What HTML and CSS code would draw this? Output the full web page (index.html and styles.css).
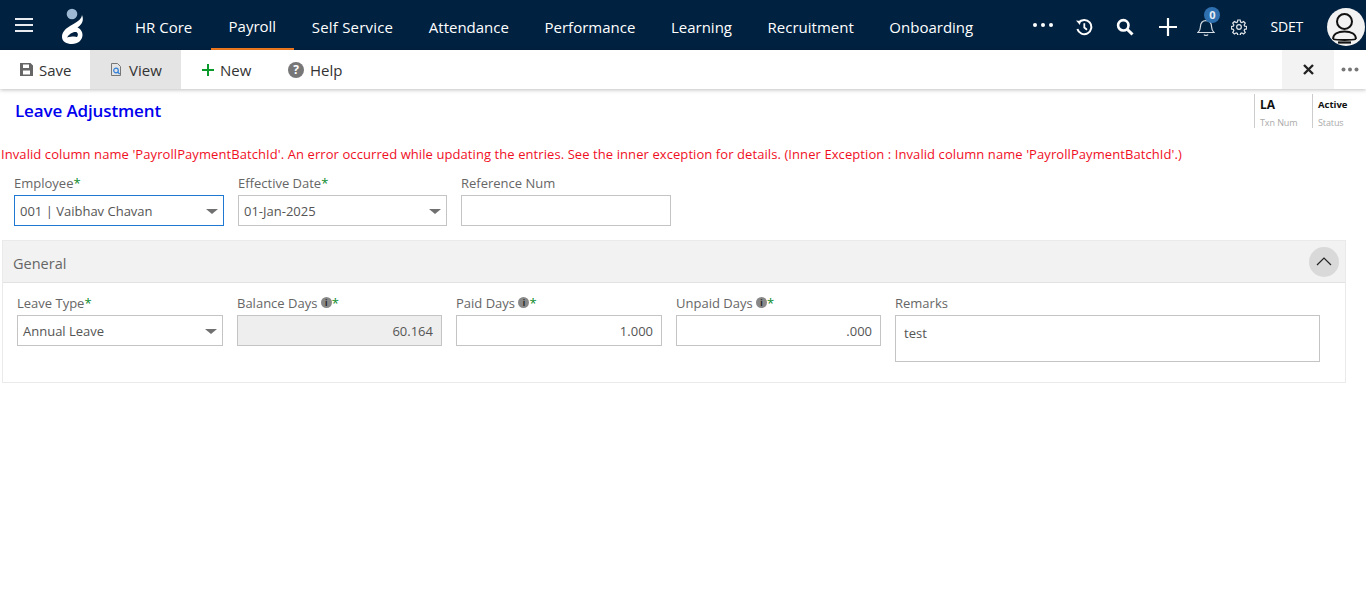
FILE: index.html
```html
<!DOCTYPE html>
<html lang="en">
<head>
<meta charset="utf-8">
<title>Leave Adjustment</title>
<link rel="stylesheet" href="styles.css">
</head>
<body>
<header class="topbar">
  <button class="burger" aria-label="Menu"><span></span><span></span><span></span></button>
  <svg class="logo" viewBox="0 0 24 37" width="24" height="37">
    <circle cx="12" cy="6" r="5.300" fill="#9db8d2"/>
    <path fill="#fff" fill-rule="evenodd" d="M22 7C21.500 12 16 14.500 10 18C5 21 2 24.500 2 29C2 33.500 6.500 36 12 36C18 36 22.500 32 22.500 27C22.500 23 20 20.500 17.500 19.500C21 17 24.500 13 22 7ZM7 29.500C9 26 13 23.500 16 24C18 24.500 18.500 27 17 29C15 28 11 28.500 7 29.500Z"/>
  </svg>
  <nav class="mainnav">
    <a class="first">HR Core</a><a class="on">Payroll</a><a class="wide">Self Service</a><a>Attendance</a><a>Performance</a><a>Learning</a><a>Recruitment</a><a>Onboarding</a>
  </nav>
  <div class="tools">
    <svg class="t-more" width="22" height="6" viewBox="0 0 22 6"><circle cx="3" cy="3" r="2" fill="#fff"/><circle cx="11" cy="3" r="2" fill="#fff"/><circle cx="19" cy="3" r="2" fill="#fff"/></svg>
    <svg class="t-hist" width="18" height="18" viewBox="0 0 18 18" fill="none" stroke="#fff" stroke-width="2"><path d="M3.600 4.700A7.100 7.100 0 1 1 2.400 11"/><path d="M1 2.600l4.800.4-.9 4z" fill="#fff" stroke="none"/><path d="M9.300 5.200v4.300l2.700 2.200" stroke-width="1.800"/></svg>
    <svg class="t-search" width="18" height="18" viewBox="0 0 18 18" fill="none" stroke="#fff"><circle cx="7.300" cy="7.300" r="5.200" stroke-width="2.600"/><path d="M11.200 11.200l5.300 5.300" stroke-width="3"/></svg>
    <svg class="t-plus" width="20" height="20" viewBox="0 0 20 20" stroke="#fff" stroke-width="2.200"><path d="M10 1v18M1 10h18"/></svg>
    <span class="bell">
      <svg width="18" height="20" viewBox="0 0 18 20" fill="none" stroke="#d5dbe2" stroke-width="1.200"><path d="M1 15.500c1.700-1.400 2.300-2.600 2.400-5.500.1-3.600 2-6.400 5.600-6.400s5.500 2.800 5.600 6.400c.1 2.900.7 4.100 2.400 5.500z"/><path d="M7 17.500c.5 1.200 3.500 1.200 4 0"/></svg>
      <b class="badge">0</b>
    </span>
    <svg class="t-gear" width="16" height="16" viewBox="0 0 24 24" fill="none" stroke="#e3e7eb" stroke-width="1.800"><circle cx="12" cy="12" r="3.500"/><path d="M10.200 1.500h3.600l.6 3.100 1.800.8 2.700-1.700 2.500 2.500-1.700 2.700.8 1.800 3 .6v3.600l-3 .6-.8 1.800 1.700 2.700-2.500 2.500-2.700-1.700-1.800.8-.6 3h-3.600l-.6-3-1.800-.8-2.700 1.700-2.500-2.500 1.700-2.700-.8-1.800-3-.6v-3.600l3-.6.8-1.800-1.700-2.700 2.500-2.500 2.700 1.700 1.800-.8z"/></svg>
    <span class="user">SDET</span>
    <span class="avatar">
      <svg width="38" height="38" viewBox="0 0 38 38" fill="none" stroke="#111" stroke-width="2"><circle cx="17.500" cy="13.500" r="7.500"/><path d="M6 31C6 26 11 23.500 17.500 23.500S29 26 29 31M6 31c4 1.300 19 1.300 23 0" stroke-width="1.800"/><path d="M11 34.500h13" stroke-width="2.200"/></svg>
    </span>
  </div>
</header>

<div class="toolbar">
  <a class="tbtn save">
    <svg width="13" height="13" viewBox="0 0 13 13"><path fill="#666" fill-rule="evenodd" d="M0 0h10.500L13 2.500V13H0zM3 1.500V5h6V1.500zM3 7.500V11.500h7V7.500z"/></svg>Save
  </a>
  <a class="tbtn view">
    <svg width="13" height="14" viewBox="0 0 13 14" fill="none"><path stroke="#777" d="M1.500.5h6l3 3v9h-9z"/><circle cx="6" cy="7.500" r="2.300" stroke="#2f7ed8" stroke-width="1.200"/><path stroke="#2f7ed8" stroke-width="1.200" d="M7.700 9.200l2 1.800"/></svg>View
  </a>
  <a class="tbtn new">
    <svg width="14" height="14" viewBox="0 0 14 14" stroke="#0a9a2a" stroke-width="2"><path d="M7 1v12M1 7h12"/></svg>New
  </a>
  <a class="tbtn help"><i class="qmark">?</i>Help</a>
  <span class="tb-fill"></span>
  <a class="tb-close"><svg width="11" height="11" viewBox="0 0 11 11" stroke="#222" stroke-width="2.400"><path d="M1 1l9 9M10 1l-9 9"/></svg></a>
  <a class="tb-more"><svg width="18" height="5" viewBox="0 0 18 5"><circle cx="2.500" cy="2.500" r="2" fill="#777"/><circle cx="9" cy="2.500" r="2" fill="#777"/><circle cx="15.500" cy="2.500" r="2" fill="#777"/></svg></a>
</div>

<main>
  <div class="titlerow">
    <h1>Leave Adjustment</h1>
    <div class="meta">
      <div class="metacell txn"><strong>LA</strong><small>Txn Num</small></div>
      <div class="metacell status"><strong>Active</strong><small>Status</small></div>
    </div>
  </div>
  <p class="error">Invalid column name 'PayrollPaymentBatchId'. An error occurred while updating the entries. See the inner exception for details. (Inner Exception : Invalid column name 'PayrollPaymentBatchId'.)</p>

  <div class="headform">
    <div class="field">
      <label>Employee<em>*</em></label>
      <div class="box select focus">001 | Vaibhav Chavan<i class="caret"></i></div>
    </div>
    <div class="field">
      <label>Effective Date<em>*</em></label>
      <div class="box select">01-Jan-2025<i class="caret"></i></div>
    </div>
    <div class="field">
      <label>Reference Num</label>
      <div class="box"></div>
    </div>
  </div>

  <section class="panel">
    <div class="panel-head">
      <span class="panel-title">General</span>
      <button class="collapse" aria-label="Collapse"><svg width="16" height="9" viewBox="0 0 16 9" fill="none" stroke="#222" stroke-width="1.200"><path d="M1 8l7-7 7 7"/></svg></button>
    </div>
    <div class="panel-body">
      <div class="field f1">
        <label>Leave Type<em>*</em></label>
        <div class="box select">Annual Leave<i class="caret"></i></div>
      </div>
      <div class="field f2">
        <label>Balance Days <i class="info">i</i><em>*</em></label>
        <div class="box num readonly">60.164</div>
      </div>
      <div class="field f3">
        <label>Paid Days <i class="info">i</i><em>*</em></label>
        <div class="box num">1.000</div>
      </div>
      <div class="field f4">
        <label>Unpaid Days <i class="info">i</i><em>*</em></label>
        <div class="box num">.000</div>
      </div>
      <div class="field f5">
        <label>Remarks</label>
        <div class="box area">test</div>
      </div>
    </div>
  </section>
</main>
</body>
</html>
```
FILE: styles.css
```css
* { box-sizing: border-box; }
html, body { margin: 0; height: 100%; }
body { font-family: "Open Sans", "Noto Sans", sans-serif; background: #fff; color: #333; overflow: hidden; }

.topbar { height: 50px; background: #002140; display: flex; align-items: center; color: #fff; }
.burger { width: 18px; height: 14px; margin-left: 15px; padding: 0; border: 0; background: none; display: flex; flex-direction: column; justify-content: space-between; }
.burger span { display: block; height: 2px; background: #e8ecf0; }
.logo { margin-left: 27px; margin-top: 3px; flex: none; }
.mainnav { display: flex; margin-left: 33px; height: 50px; }
.mainnav a { display: flex; align-items: center; padding: 5px 17.800px 0; font-size: 15px; color: #fff; height: 50px; border-bottom: 2px solid transparent; }
.mainnav a.first { padding-left: 18px; padding-right: 18.500px; }
.mainnav a.wide { letter-spacing: 0.2px; }
.mainnav a.on { border-bottom-color: #f47b20; padding-top: 3px; }
.tools { margin-left: auto; display: flex; align-items: center; height: 50px; position: relative; }
.t-more { margin-right: 21px; }
.t-hist { margin-right: 23px; margin-top: 4px; }
.t-search { margin-right: 24px; margin-top: 4px; }
.t-plus { margin-right: 19px; margin-top: 4px; }
.bell { position: relative; display: block; width: 18px; height: 20px; margin-right: 16px; margin-top: 4px; }
.badge { position: absolute; left: 7px; top: -10px; width: 16px; height: 16px; border-radius: 50%; background: #2f70b0; color: #e8eef5; font-size: 11px; font-weight: 700; line-height: 16px; text-align: center; }
.t-gear { margin-right: 23px; margin-top: 4px; }
.user { font-size: 14px; letter-spacing: -0.2px; margin-right: 24px; margin-top: 2px; }
.avatar { width: 38px; height: 38px; border-radius: 50%; background: #f2f2f2; display: block; margin-right: 1px; margin-top: 4px; }

.toolbar { height: 39px; display: flex; align-items: stretch; background: #fff; box-shadow: 0 1px 4px rgba(0,0,0,.25); position: relative; }
.tbtn { display: flex; align-items: center; font-size: 15px; color: #333; gap: 6px; }
.save { padding-left: 20px; width: 90px; }
.view { width: 91px; padding-left: 20px; background: #e4e4e4; }
.new { margin-left: 20px; width: 87px; gap: 5px; }
.help { gap: 6px; }
.qmark { width: 16px; height: 16px; border-radius: 50%; background: #777; color: #fff; font-style: normal; font-weight: 700; font-size: 12px; line-height: 16px; text-align: center; }
.tb-fill { flex: 1; }
.tb-close { width: 52px; background: #f3f3f3; display: flex; align-items: center; justify-content: center; }
.tb-more { width: 32px; display: flex; align-items: center; justify-content: center; }

.titlerow { display: flex; justify-content: space-between; align-items: flex-start; height: 39px; padding-top: 5px; }
h1 { margin: 6px 0 0 15px; font-size: 17px; font-weight: 600; color: #0000ee; line-height: 22px; letter-spacing: -0.13px; }
.meta { display: flex; }
.metacell { border-left: 1px solid #ccc; height: 34px; padding-left: 5px; display: flex; flex-direction: column; }
.txn { width: 58px; }
.status { width: 54px; }
.metacell strong { font-size: 12px; line-height: 21px; font-weight: 700; color: #111; }
.status strong { font-size: 9.500px; }
.metacell small { font-size: 9px; line-height: 14px; margin-top: 1px; color: #aaa; letter-spacing: -0.1px; }

.error { margin: 17px 0 0 1px; font-size: 13px; line-height: 18px; color: #f00f1f; white-space: nowrap; letter-spacing: 0.08px; }

.headform { display: flex; gap: 14px; margin: 11px 0 0 14px; }
.headform .field { width: 210px; }
.headform .field:nth-child(2) { width: 209px; }
label { display: block; font-size: 13px; line-height: 18px; color: #666; height: 18px; white-space: nowrap; }
label em { color: #0a8a2a; font-style: normal; }
.box { height: 31px; border: 1px solid #c4c4c4; font-size: 13px; color: #555; padding: 0 5px; line-height: 31px; position: relative; background: #fff; margin-top: 3px; }
.focus { border-color: #1f78d1; }
.caret { position: absolute; right: 5px; top: 13px; width: 0; height: 0; border-left: 6px solid transparent; border-right: 6px solid transparent; border-top: 5px solid #707070; }
.num { text-align: right; padding-right: 8px; }
.readonly { background: #eee; }
.area { height: 47px; padding: 2px 8px; }

.panel { margin: 14px 20px 0 2px; border: 1px solid #eaeaea; height: 143px; }
.panel-head { height: 42px; background: #f2f2f2; border-bottom: 1px solid #e2e2e2; display: flex; align-items: center; justify-content: space-between; padding: 0 6px 0 10px; font-size: 14.500px; color: #666; }
.panel-title { padding-top: 3px; }
.collapse { width: 30px; height: 30px; border-radius: 50%; background: #d9d9d9; border: 0; padding: 0; display: flex; align-items: center; justify-content: center; }
.panel-body { display: flex; padding: 11px 0 0 14px; gap: 14px; }
.f1 { width: 206px; }
.f2 { width: 205px; }
.f3 { width: 206px; }
.f4 { width: 205px; }
.f5 { width: 425px; }
.info { display: inline-block; width: 11px; height: 11px; border-radius: 50%; background: #888; color: #222; font-size: 8px; font-weight: 700; font-style: normal; line-height: 11px; text-align: center; vertical-align: 2px; }
```
